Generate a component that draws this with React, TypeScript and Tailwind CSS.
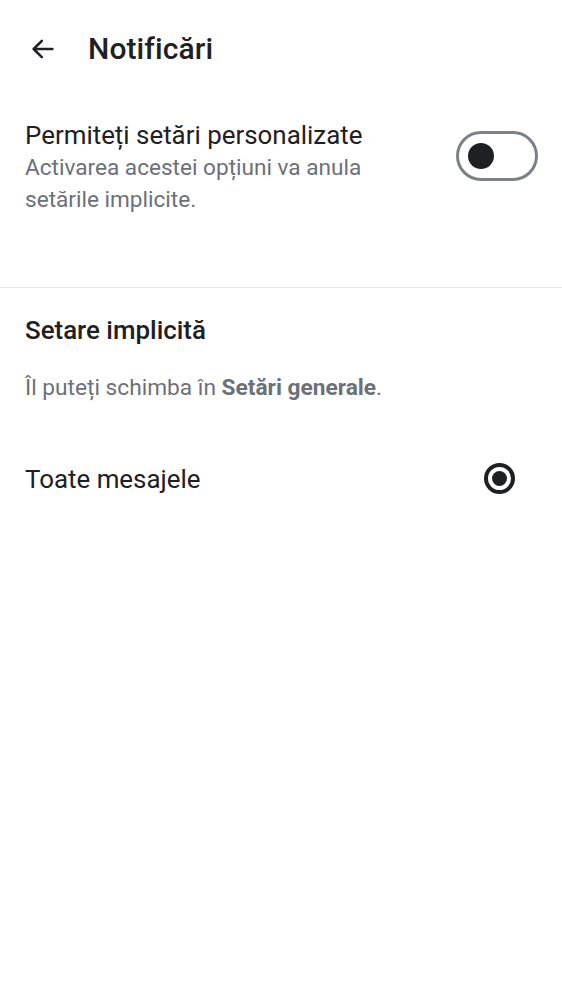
import React, { useState } from 'react';

const ArrowBack = () => (
  <svg width="28" height="28" viewBox="0 0 24 24" fill="none" stroke="#1f2024" strokeWidth="2.2" strokeLinecap="round" strokeLinejoin="round">
    <path d="M20 12H4.5" />
    <path d="M11 5l-7 7 7 7" />
  </svg>
);

export default function App() {
  const [custom, setCustom] = useState(false);

  return (
    <div className="min-h-screen bg-white text-[#1f2024]" style={{ fontFamily: 'Roboto, "Noto Sans", sans-serif' }}>
      {/* header */}
      <div className="flex items-center h-[98px] pl-[28px] pb-[1px]">
        <button className="w-[30px] h-[30px] flex items-center justify-center">
          <ArrowBack />
        </button>
        <h1 className="ml-[30px] text-[30px] font-medium leading-none tracking-[0.1px]">Notificări</h1>
      </div>

      {/* custom settings toggle */}
      <div className="flex items-start justify-between pl-[25px] pr-[25px] pt-[22px] pb-[71px] border-b border-[#e9eaed]">
        <div className="max-w-[370px]">
          <div className="text-[25.9px] leading-[30px]">Permiteți setări personalizate</div>
          <div className="mt-[2px] text-[22.6px] leading-[32px] text-[#6b7079]">
            Activarea acestei opțiuni va anula setările implicite.
          </div>
        </div>
        <button
          onClick={() => setCustom(!custom)}
          className="mt-[11px] mr-[-1px] w-[82px] h-[50px] rounded-full border-[3px] border-[#7b8089] flex items-center px-[9px] shrink-0"
        >
          <span className={`w-[26px] h-[26px] rounded-full bg-[#1f2024] ${custom ? 'ml-auto' : ''}`} />
        </button>
      </div>

      {/* default settings */}
      <div className="pl-[25px] pr-[25px]">
        <div className="pt-[27px] text-[25.9px] font-medium leading-[30px]">Setare implicită</div>
        <div className="mt-[29px] text-[22.7px] leading-[28px] text-[#6b7079]">
          Îl puteți schimba în <span className="font-bold">Setări generale</span>.
        </div>
        <div className="flex items-center justify-between mt-[61px]">
          <span className="text-[25.9px] leading-[30px]">Toate mesajele</span>
          <span className="mr-[22px] w-[31px] h-[31px] rounded-full border-[4px] border-[#1f2024] flex items-center justify-center">
            <span className="w-[15px] h-[15px] rounded-full bg-[#1f2024]" />
          </span>
        </div>
      </div>
    </div>
  );
}
